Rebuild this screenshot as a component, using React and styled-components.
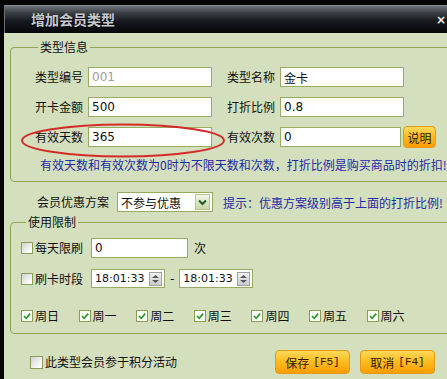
import React from 'react'
import styled, { createGlobalStyle } from 'styled-components'

const GlobalStyle = createGlobalStyle`
  html, body {
    margin: 0;
    padding: 0;
    background: #050505;
  }
  body {
    font-family: "Noto Sans CJK SC", "Noto Sans", sans-serif;
    font-size: 12px;
    color: #111;
  }
`

const Screen = styled.div`
  width: 447px;
  height: 379px;
  overflow: hidden;
  box-sizing: border-box;
  padding: 5px 0 0 4px;
  background: #050505;
`

const Window = styled.div`
  width: 460px;
  height: 374px;
  display: flex;
  flex-direction: column;
  border-top: 1px solid #858a91;
`

const TitleBar = styled.div`
  height: 27px;
  flex: none;
  display: flex;
  align-items: center;
  justify-content: space-between;
  padding: 0 18px 0 26px;
  border-left: 1px solid #6c7076;
  background: linear-gradient(#6f747b 0%, #3b4046 25%, #161a1f 55%, #05070a 100%);
`

const Title = styled.span`
  font-size: 14px;
  font-weight: bold;
  color: #c6cacf;
  line-height: 27px;
  text-shadow: 0 1px 1px #000;
`

const Close = styled.span`
  font-family: "DejaVu Sans", sans-serif;
  font-size: 12px;
  font-weight: bold;
  color: #f2f2f2;
`

const Body = styled.div`
  position: relative;
  flex: 1;
  background: #d4dfbd;
  padding: 7px 6px 0 6px;
`

const Group = styled.fieldset`
  margin: ${p => p.$mt || 0}px 0 0 0;
  border: 1px solid #8fa456;
  border-radius: 4px;
  padding: ${p => p.$pad};
  min-width: 0;
`

const Legend = styled.legend`
  margin-left: ${p => p.$indent}px;
  padding: 0 2px;
  font-size: 12px;
  line-height: 14px;
  color: #111;
`

const Row = styled.div`
  display: flex;
  align-items: center;
  height: ${p => p.$h || 20}px;
  margin-top: ${p => p.$mt || 0}px;
  padding-left: ${p => p.$pl || 0}px;
`

const Label = styled.span`
  flex: none;
  width: ${p => p.$w || 48}px;
  margin-left: ${p => p.$ml || 0}px;
  margin-right: ${p => p.$mr || 5}px;
  line-height: 16px;
  white-space: nowrap;
`

const Input = styled.div`
  flex: none;
  box-sizing: border-box;
  width: ${p => p.$w}px;
  height: ${p => p.$h || 20}px;
  border: 1px solid #98ab63;
  background: #fff;
  display: flex;
  align-items: center;
  padding: 0 2px 0 3px;
  font-family: ${p => (p.$cjk ? '"Noto Sans CJK SC", sans-serif' : '"DejaVu Sans", sans-serif')};
  font-size: ${p => p.$fs || 12}px;
  color: ${p => (p.$muted ? '#a0a0a0' : '#111')};
  white-space: nowrap;
`

const Value = styled.span`
  flex: 1;
`

const OrangeButton = styled.button`
  flex: none;
  box-sizing: border-box;
  width: ${p => p.$w}px;
  height: ${p => p.$h}px;
  margin-left: ${p => p.$ml || 0}px;
  padding: 0;
  border: 1px solid #e39a1a;
  border-radius: 4px;
  background: linear-gradient(#ffd95a 0%, #ffbd22 45%, #ff9d00 100%);
  font-family: "Noto Sans CJK SC", sans-serif;
  font-size: 12px;
  color: #2a1a00;
  display: flex;
  align-items: center;
  justify-content: center;
  gap: 4px;
`

const Key = styled.span`
  font-family: "Liberation Mono", monospace;
  font-size: 11px;
`

const Note = styled.div`
  margin-top: 10px;
  padding-left: 5px;
  line-height: 16px;
  color: #1e2aa8;
  white-space: nowrap;
`

const Hint = styled.span`
  margin-left: 10px;
  color: #1e2aa8;
  white-space: nowrap;
`

const ArrowButton = styled.span`
  box-sizing: border-box;
  width: 15px;
  height: 16px;
  border: 1px solid #b3c495;
  background: linear-gradient(#f2f7e6, #c6d7a4);
  display: flex;
  align-items: center;
  justify-content: center;
`

const Spinner = styled.span`
  box-sizing: border-box;
  width: 13px;
  height: 14px;
  border: 1px solid #9ba39f;
  background: linear-gradient(#f0f0f0, #c9cbcc);
  display: flex;
  align-items: center;
  justify-content: center;
`

const Dash = styled.span`
  margin: 0 5px;
  font-family: "DejaVu Sans", sans-serif;
`

const Box = styled.span`
  flex: none;
  box-sizing: border-box;
  width: ${p => p.$size}px;
  height: ${p => p.$size}px;
  border: 1px solid #8a9e55;
  background: ${p => (p.$checked ? '#fbfdf7' : 'linear-gradient(135deg, #cfd2cb 0%, #ffffff 85%)')};
  display: flex;
  align-items: center;
  justify-content: center;
  margin-right: 2px;
`

const Check = styled.label`
  display: flex;
  align-items: center;
  line-height: 16px;
  white-space: nowrap;
`

const Days = styled.div`
  display: grid;
  grid-template-columns: repeat(7, 57.6px);
  align-items: center;
  height: 16px;
  margin-top: 20px;
`

const Footer = styled.div`
  display: flex;
  align-items: center;
  height: 24px;
  margin-top: 16px;
  padding-left: 20px;
`

const Actions = styled.div`
  display: flex;
  gap: 10px;
  margin-left: auto;
  margin-right: 23px;
`

const Mark = styled.svg`
  position: absolute;
  left: 16px;
  top: 90px;
  overflow: visible;
  pointer-events: none;
`

const CheckBox = ({ checked, size = 12, children }) => (
  <Check>
    <Box $checked={checked} $size={size}>
      {checked && (
        <svg width="10" height="10" viewBox="0 0 10 10">
          <path d="M2 5 L4.2 7.3 L8.2 2.6" fill="none" stroke="#2f9a2a" strokeWidth="1.7" />
        </svg>
      )}
    </Box>
    {children}
  </Check>
)

const TimeField = ({ value }) => (
  <Input $w={74} $h={19} $fs={11}>
    <Value>{value}</Value>
    <Spinner>
      <svg width="9" height="10" viewBox="0 0 9 10">
        <path d="M4.5 1 L8 4 L1 4 Z" fill="#555" />
        <path d="M1 6 L8 6 L4.5 9 Z" fill="#555" />
      </svg>
    </Spinner>
  </Input>
)

const days = ['周日', '周一', '周二', '周三', '周四', '周五', '周六']

export default function App() {
  return (
    <>
      <GlobalStyle />
      <Screen>
        <Window>
          <TitleBar>
            <Title>增加会员类型</Title>
            <Close>×</Close>
          </TitleBar>
          <Body>
            <Group $pad="13px 0 8px 24px">
              <Legend $indent={3}>类型信息</Legend>
              <Row>
                <Label>类型编号</Label>
                <Input $w={124} $muted><Value>001</Value></Input>
                <Label $ml={15}>类型名称</Label>
                <Input $w={124} $cjk><Value>金卡</Value></Input>
              </Row>
              <Row $mt={10}>
                <Label>开卡金额</Label>
                <Input $w={124}><Value>500</Value></Input>
                <Label $ml={15}>打折比例</Label>
                <Input $w={124}><Value>0.8</Value></Input>
              </Row>
              <Row $mt={10}>
                <Label>有效天数</Label>
                <Input $w={124}><Value>365</Value></Input>
                <Label $ml={15}>有效次数</Label>
                <Input $w={121}><Value>0</Value></Input>
                <OrangeButton $w={33} $h={22} $ml={2}>说明</OrangeButton>
              </Row>
              <Note>有效天数和有效次数为0时为不限天数和次数，打折比例是购买商品时的折扣!</Note>
            </Group>

            <Row $mt={10} $pl={27}>
              <Label $w={72} $mr={8}>会员优惠方案</Label>
              <Input $w={96} $cjk>
                <Value>不参与优惠</Value>
                <ArrowButton>
                  <svg width="11" height="9" viewBox="0 0 11 9">
                    <path d="M2 2.5 L5.5 6 L9 2.5" fill="none" stroke="#1f5a1f" strokeWidth="2" />
                  </svg>
                </ArrowButton>
              </Input>
              <Hint>提示：优惠方案级别高于上面的打折比例!</Hint>
            </Row>

            <Group $pad="9px 0 9px 10px" $mt={3}>
              <Legend $indent={5}>使用限制</Legend>
              <Row>
                <CheckBox><Label $mr={8}>每天限刷</Label></CheckBox>
                <Input $w={97}><Value>0</Value></Input>
                <Label $ml={6}>次</Label>
              </Row>
              <Row $mt={11} $h={19}>
                <CheckBox><Label $mr={8}>刷卡时段</Label></CheckBox>
                <TimeField value="18:01:33" />
                <Dash>-</Dash>
                <TimeField value="18:01:33" />
              </Row>
              <Days>
                {days.map(d => (
                  <CheckBox key={d} checked>{d}</CheckBox>
                ))}
              </Days>
            </Group>

            <Footer>
              <CheckBox size={13}>此类型会员参于积分活动</CheckBox>
              <Actions>
                <OrangeButton $w={75} $h={24}>保存<Key>[F5]</Key></OrangeButton>
                <OrangeButton $w={75} $h={24}>取消<Key>[F4]</Key></OrangeButton>
              </Actions>
            </Footer>

            <Mark width="206" height="35" viewBox="0 0 206 35">
              <ellipse cx="103" cy="17.5" rx="101" ry="16" fill="none" stroke="#d42a2a" strokeWidth="2" />
            </Mark>
          </Body>
        </Window>
      </Screen>
    </>
  )
}
